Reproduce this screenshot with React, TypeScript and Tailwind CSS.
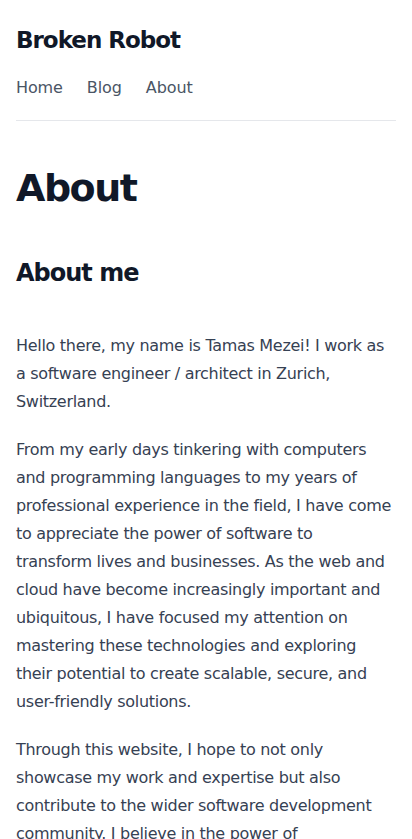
export default function App() {
  return (
    <div className="min-h-screen bg-white px-4 font-['DejaVu_Sans',sans-serif]">
      <header className="pt-6 pb-[20px] border-b border-gray-200">
        <h1 className="text-[23px] leading-8 font-bold tracking-[-1px] text-gray-900">Broken Robot</h1>
        <nav className="mt-[20px] flex gap-6 text-base leading-6 tracking-[-0.1px] text-gray-600">
          <a href="#">Home</a>
          <a href="#">Blog</a>
          <a href="#">About</a>
        </nav>
      </header>
      <main>
        <h1 className="mt-[45px] text-[38px] leading-[44px] font-extrabold tracking-[-1.5px] text-gray-900">
          About
        </h1>
        <h2 className="mt-[47px] text-2xl leading-8 font-bold tracking-[-1px] text-gray-900">About me</h2>
        <div className="mt-[43px] text-base leading-7 tracking-[-0.3px] text-gray-700">
          <p>
            Hello there, my name is Tamas Mezei! I work as
            <br />a software engineer / architect in Zurich,
            <br />
            Switzerland.
          </p>
          <p className="mt-5">
            From my early days tinkering with computers
            <br />
            and programming languages to my years of
            <br />
            professional experience in the field, I have come
            <br />
            to appreciate the power of software to
            <br />
            transform lives and businesses. As the web and
            <br />
            cloud have become increasingly important and
            <br />
            ubiquitous, I have focused my attention on
            <br />
            mastering these technologies and exploring
            <br />
            their potential to create scalable, secure, and
            <br />
            user-friendly solutions.
          </p>
          <p className="mt-5">
            Through this website, I hope to not only
            <br />
            showcase my work and expertise but also
            <br />
            contribute to the wider software development
            <br />
            community. I believe in the power of
            <br />
            knowledge sharing and collaboration, and I am excited to connect with like-minded
            professionals and enthusiasts.
          </p>
        </div>
      </main>
    </div>
  );
}
